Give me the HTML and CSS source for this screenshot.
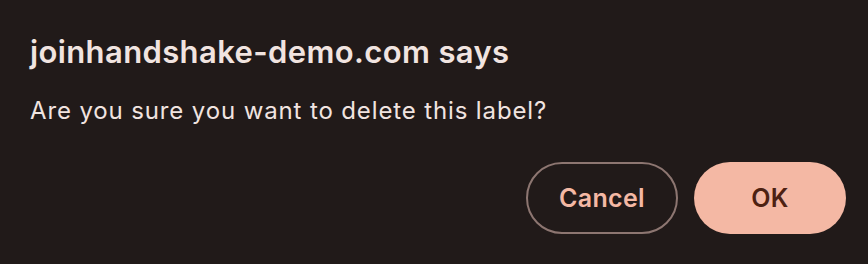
FILE: index.html
```html
<!DOCTYPE html>
<html lang="en">
<head>
<meta charset="utf-8">
<title>Dialog</title>
<link rel="stylesheet" href="styles.css">
</head>
<body>
<div class="dialog">
  <h1 class="title">joinhandshake-demo.com says</h1>
  <p class="message">Are you sure you want to delete this label?</p>
  <div class="actions">
    <button class="btn btn-outline">Cancel</button>
    <button class="btn btn-filled">OK</button>
  </div>
</div>
</body>
</html>
```

FILE: styles.css
```css
html, body {
  margin: 0;
  padding: 0;
  background: #211a19;
}
body {
  width: 868px;
  height: 264px;
  overflow: hidden;
  font-family: Inter, "Liberation Sans", sans-serif;
}
.dialog {
  padding: 33px 22px 0 30px;
  display: flex;
  flex-direction: column;
}
.title {
  margin: 0;
  font-size: 31px;
  line-height: 38px;
  font-weight: 600;
  color: #f1e4e0;
  letter-spacing: 0.38px;
}
.message {
  margin: 25px 0 0 0;
  font-size: 24px;
  line-height: 30px;
  font-weight: 400;
  color: #f1e4e0;
  letter-spacing: 0.87px;
}
.actions {
  margin-top: 36px;
  display: flex;
  justify-content: flex-end;
  gap: 16px;
}
.btn {
  height: 72px;
  width: 152px;
  border-radius: 36px;
  font-family: Inter, "Liberation Sans", sans-serif;
  font-size: 25px;
  font-weight: 600;
  letter-spacing: 0.3px;
  padding: 0;
  box-sizing: border-box;
  cursor: pointer;
}
.btn-outline {
  background: transparent;
  border: 2px solid #8d7671;
  color: #f4b8a4;
}
.btn-filled {
  background: #f4b8a4;
  border: none;
  color: #4d2112;
}
```
